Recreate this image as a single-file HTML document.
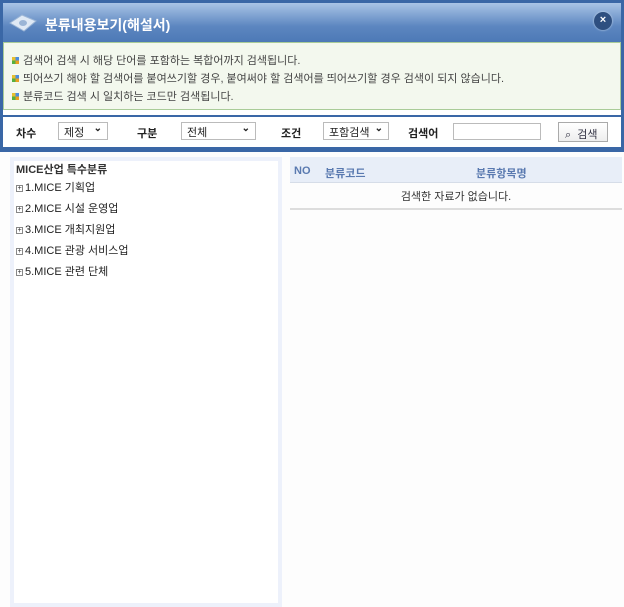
<!DOCTYPE html>
<html><head><meta charset="utf-8"><style>
*{margin:0;padding:0;box-sizing:border-box}
body{width:624px;height:599px;background:#fdfdfd;font-family:"Liberation Sans","Noto Sans CJK KR",sans-serif;position:relative;overflow:hidden;font-size:11px;color:#333}
.frame{position:absolute;left:0;top:0;width:624px;height:152px;background:#fff;border:3px solid #3a67a6;border-top-width:3px;border-bottom-width:5px}
.title{position:absolute;left:0;top:0;width:618px;height:39px;background:linear-gradient(#a9c4e6,#5c86c0 60%,#4d79b6);}
.title span{position:absolute;left:42px;top:12px;color:#fff;font-weight:bold;font-size:14px}
.close{position:absolute;right:9px;top:9px;width:18px;height:18px;border-radius:50%;background:#2e4f80;color:#fff;font-weight:bold;font-size:11px;text-align:center;line-height:17px;box-shadow:0 0 2px #cde}
.notice{position:absolute;left:0;top:39px;width:618px;height:68px;background:#f3f8ee;border:1px solid #a9cc98}
.notice p{position:absolute;left:8px;font-size:11px;color:#444}
.sq{display:inline-block;width:7px;height:7px;margin-right:4px;vertical-align:0;background:conic-gradient(#4a8de0 0 25%,#e8a020 0 50%,#55b040 0 75%,#e8c030 0)}
.line{position:absolute;left:0;top:112px;width:618px;height:2px;background:#3a67a6}
.bar{position:absolute;top:114px;left:0;width:618px;height:28px}
.lb{position:absolute;top:8px;font-weight:bold;font-size:11px;color:#222}
.sel{position:absolute;top:5px;height:18px;border:1px solid #bbb;background:#fff;font-size:11px;padding:1px 5px;color:#222}
.sel b{position:absolute;right:5px;top:0;font-size:10px}
.inp{position:absolute;left:450px;top:6px;width:88px;height:17px;border:1px solid #bbb;background:#fff}
.btn{position:absolute;left:555px;top:5px;width:50px;height:20px;border:1px solid #aaa;background:linear-gradient(#fff,#eee);font-size:11px;color:#334;padding:3px 0 0 6px}
.lp{position:absolute;left:10px;top:157px;width:272px;height:450px;border:4px solid #edf1fb;background:#fff}
.lp div{position:absolute;left:2px;font-size:11px;color:#222}
.pl{display:inline-block;width:7px;height:7px;border:1px solid #888;font-size:7px;line-height:5px;text-align:center;margin-right:2px;vertical-align:1px}
.rp{position:absolute;left:290px;top:157px;width:332px;height:450px}
.rh{position:absolute;left:0;top:0;width:332px;height:26px;background:#e8eef8;border-bottom:1px solid #d6dde8;color:#5a7ab0;font-weight:bold;font-size:11px}
.rh span{position:absolute;top:8px}
.nd{position:absolute;left:0;top:26px;width:332px;height:27px;border-bottom:2px solid #ddd;text-align:center;padding-top:5px;color:#333}
</style></head><body>
<div class="frame">
 <div class="title">
  <svg style="position:absolute;left:5px;top:8px" width="30" height="24" viewBox="0 0 30 24"><polygon points="2,12 14,4 28,10 16,20" fill="#dfe9f5" stroke="#9bb5d6"/><ellipse cx="15" cy="12" rx="4" ry="3" fill="#9bb5d6"/></svg>
  <span>분류내용보기(해설서)</span>
  <div class="close">×</div>
 </div>
 <div class="notice">
  <p style="top:9px"><i class="sq"></i>검색어 검색 시 해당 단어를 포함하는 복합어까지 검색됩니다.</p>
  <p style="top:27px"><i class="sq"></i>띄어쓰기 해야 할 검색어를 붙여쓰기할 경우, 붙여써야 할 검색어를 띄어쓰기할 경우 검색이 되지 않습니다.</p>
  <p style="top:45px"><i class="sq"></i>분류코드 검색 시 일치하는 코드만 검색됩니다.</p>
 </div>
 <div class="line"></div>
 <div class="bar">
  <span class="lb" style="left:13px">차수</span>
  <div class="sel" style="left:55px;width:50px">제정<b>⌄</b></div>
  <span class="lb" style="left:134px">구분</span>
  <div class="sel" style="left:178px;width:75px">전체<b>⌄</b></div>
  <span class="lb" style="left:278px">조건</span>
  <div class="sel" style="left:320px;width:66px">포함검색<b>⌄</b></div>
  <span class="lb" style="left:405px">검색어</span>
  <div class="inp"></div>
  <div class="btn">⌕ &nbsp;검색</div>
 </div>
</div>
<div class="lp">
 <div style="top:0px;font-weight:bold;color:#333">MICE산업 특수분류</div>
 <div style="top:18px"><i class="pl">+</i>1.MICE 기획업</div>
 <div style="top:39px"><i class="pl">+</i>2.MICE 시설 운영업</div>
 <div style="top:60px"><i class="pl">+</i>3.MICE 개최지원업</div>
 <div style="top:81px"><i class="pl">+</i>4.MICE 관광 서비스업</div>
 <div style="top:102px"><i class="pl">+</i>5.MICE 관련 단체</div>
</div>
<div class="rp">
 <div class="rh"><span style="left:4px">NO</span><span style="left:35px">분류코드</span><span style="left:186px">분류항목명</span></div>
 <div class="nd">검색한 자료가 없습니다.</div>
</div>
</body></html>
